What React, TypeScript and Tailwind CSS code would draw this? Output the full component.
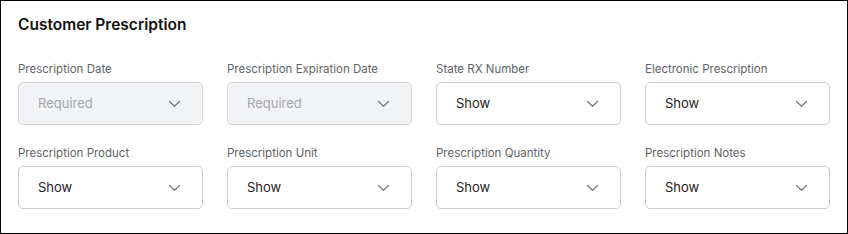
import React from 'react';

interface Field {
    label: string;
    value: string;
    disabled?: boolean;
}

const fields: Field[] = [
    { label: 'Prescription Date', value: 'Required', disabled: true },
    { label: 'Prescription Expiration Date', value: 'Required', disabled: true },
    { label: 'State RX Number', value: 'Show' },
    { label: 'Electronic Prescription', value: 'Show' },
    { label: 'Prescription Product', value: 'Show' },
    { label: 'Prescription Unit', value: 'Show' },
    { label: 'Prescription Quantity', value: 'Show' },
    { label: 'Prescription Notes', value: 'Show' },
];

const Chevron: React.FC = () => (
    <svg width="13" height="8" viewBox="0 0 13 8" fill="none">
        <path d="M1.5 1.5l5 4.8 5-4.8" stroke="#72767c" strokeWidth="1.2" strokeLinecap="round" strokeLinejoin="round" />
    </svg>
);

const SelectField: React.FC<{ field: Field }> = ({ field }) => (
    <div className="flex flex-col">
        <label className="text-[11.5px] leading-4 text-[#606368] mb-[5px]">{field.label}</label>
        <div
            className={
                field.disabled
                    ? 'h-[43px] flex items-center justify-between pl-[19px] pr-[21px] rounded-[5px] border border-[#d3d6da] bg-[#f2f3f5] text-[13px] text-[#a3a6aa]'
                    : 'h-[43px] flex items-center justify-between pl-[19px] pr-[21px] rounded-[5px] border border-[#c9ccd0] bg-white text-[13px] text-[#1f2124]'
            }
        >
            <span>{field.value}</span>
            <Chevron />
        </div>
    </div>
);

export default function App() {
    return (
        <div className="w-[848px] h-[234px] border border-black bg-white px-[17px] pt-[14px]" style={{ fontFamily: 'Inter, "Noto Sans", sans-serif' }}>
            <h2 className="text-[15.5px] leading-5 font-semibold text-[#111]">Customer Prescription</h2>
            <div className="grid grid-cols-4 gap-x-6 gap-y-5 mt-[26px]">
                {fields.map(f => (
                    <SelectField key={f.label} field={f} />
                ))}
            </div>
        </div>
    );
}
